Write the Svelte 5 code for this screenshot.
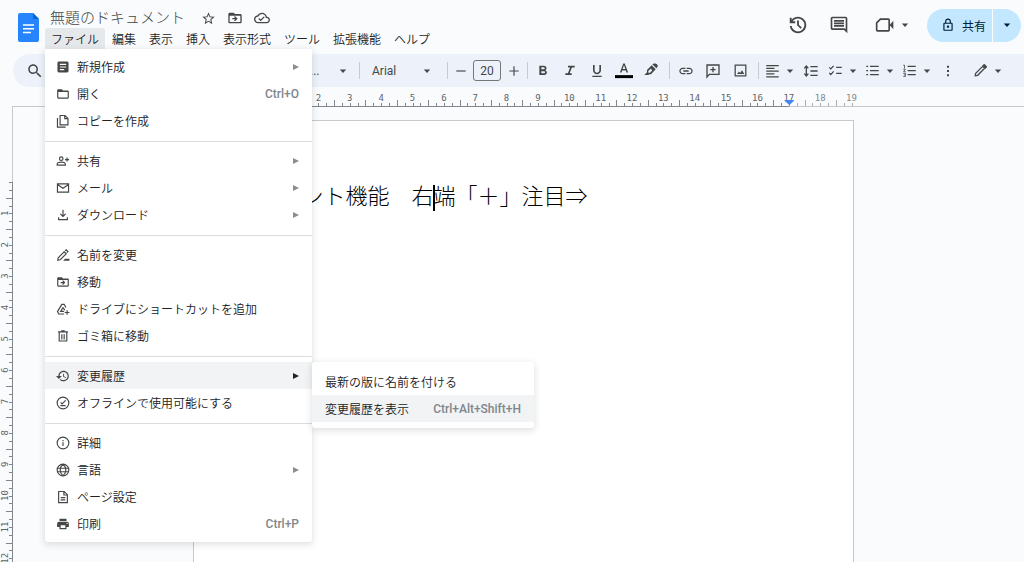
<script>
  // fill: solid outline path, line: stroked path, both on a 24 unit grid
  const icons = {
    star: { fill: 'M22 9.24l-7.19-.62L12 2 9.19 8.63 2 9.24l5.46 4.73L5.82 21 12 17.27 18.18 21l-1.63-7.03L22 9.24zM12 15.4l-3.76 2.27 1-4.28-3.32-2.88 4.38-.38L12 6.1l1.71 4.04 4.38.38-3.32 2.88 1 4.28L12 15.4z' },
    move: { fill: 'M20 6h-8l-2-2H4c-1.1 0-2 .9-2 2v12c0 1.1.9 2 2 2h16c1.1 0 2-.9 2-2V8c0-1.1-.9-2-2-2zm0 12H4V8.5h16V18zM12.16 12H8v2h4.16l-1.59 1.59L11.99 17 16 13.01 11.99 9l-1.41 1.41L12.16 12z' },
    cloud: { fill: 'M19.35 10.04C18.67 6.59 15.64 4 12 4 9.11 4 6.6 5.64 5.35 8.04 2.34 8.36 0 10.91 0 14c0 3.31 2.69 6 6 6h13c2.76 0 5-2.24 5-5 0-2.64-2.05-4.78-4.65-4.96zM19 18H6c-2.21 0-4-1.79-4-4 0-2.05 1.53-3.76 3.56-3.97l1.07-.11.5-.95C8.08 7.14 9.94 6 12 6c2.62 0 4.88 1.86 5.39 4.43l.3 1.5 1.53.11c1.56.1 2.78 1.41 2.78 2.96 0 1.65-1.35 3-3 3zm-9-3.82l-2.09-2.09L6.5 13.5 10 17l6.01-6.01-1.41-1.41z' },
    recent: { fill: 'M12 21q-3.45 0-6.01-2.29T3.05 13H5.1q.35 2.6 2.31 4.3T12 19q2.925 0 4.96-2.04T19 12q0-2.925-2.04-4.96T12 5q-1.725 0-3.225.8T6.25 8H9v2H3V4h2v2.35q1.275-1.6 3.11-2.475T12 3q1.875 0 3.51.71t2.85 1.925 1.925 2.85T21 12t-.71 3.51-1.925 2.85-2.85 1.925T12 21Zm2.8-4.8L11 12.4V7h2v4.6l3.2 3.2-1.4 1.4Z' },
    comment: { fill: 'M21.99 4c0-1.1-.89-2-1.99-2H4c-1.1 0-2 .9-2 2v12c0 1.1.9 2 2 2h14l4 4-.01-18zM20 4v13.17L18.83 16H4V4h16zM6 12h12v2H6zm0-3h12v2H6zm0-3h12v2H6z' },
    video: { line: 'M2 9.500L6.500 5H16Q17 5 17 6V18Q17 19 16 19H3Q2 19 2 18Z', fill: 'M17.500 12l4.500-5v10z' },
    lock: { fill: 'M18 8h-1V6c0-2.76-2.24-5-5-5S7 3.24 7 6v2H6c-1.1 0-2 .9-2 2v10c0 1.1.9 2 2 2h12c1.1 0 2-.9 2-2V10c0-1.1-.9-2-2-2zM9 6c0-1.66 1.34-3 3-3s3 1.34 3 3v2H9V6zm9 14H6V10h12v10zm-6-3c1.1 0 2-.9 2-2s-.9-2-2-2-2 .9-2 2 .9 2 2 2z' },
    search: { fill: 'M15.500 14h-.79l-.28-.27C15.410 12.590 16 11.110 16 9.500 16 5.910 13.090 3 9.500 3S3 5.910 3 9.500 5.910 16 9.500 16c1.610 0 3.090-.59 4.230-1.570l.27.28v.79l5 4.990L20.490 19l-4.990-5zm-6 0C7.010 14 5 11.990 5 9.500S7.010 5 9.500 5 14 7.010 14 9.500 11.990 14 9.500 14z' },
    article: { fill: 'M19 2.500H5A2.500 2.500 0 0 0 2.500 5v14A2.500 2.500 0 0 0 5 21.500h14a2.500 2.500 0 0 0 2.500-2.500V5A2.500 2.500 0 0 0 19 2.500zM14 17.500H6.500v-2H14zm3.500-4.500h-11v-2h11zm0-4.500h-11v-2h11z' },
    folder: { fill: 'M20 6h-8l-2-2H4c-1.1 0-2 .9-2 2v12c0 1.1.9 2 2 2h16c1.1 0 2-.9 2-2V8c0-1.1-.9-2-2-2zm0 12H4V8.500h16V18z' },
    copy: { line: 'M7 2.500h8.500l5 5V18.500H7zM15 3v5h5M2.500 7v15.500h14' },
    person: { line: 'M2 19v-1.500q0-3.500 7-3.500t7 3.500V19zM19 6v7M15.500 9.500h7', circle: [9, 8, 3] },
    mail: { line: 'M2.500 5h19v14h-19zM3 6.500l9 6 9-6' },
    download: { line: 'M12 3v11M7.500 10l4.500 4.500 4.500-4.500M4.500 16v4h15v-4' },
    rename: { line: 'M3 21l.8-4.200L14 6.500l3.500 3.500L7.200 20.200zM15.500 5l2-2 3 3-2 2', fill: 'M12 22l3.500-3.500H23V22z' },
    drive: { line: 'M17 9.500L14 4h-4L2.500 16.500l2.200 4H14M12 9.500l-4 6.500h6M12 9.500l3 4.500M19 14v8M15 18h8' },
    trash: { line: 'M5.500 6v14.500h13V6M3.500 5h17M9 3h6M10 9v9M14 9v9' },
    history: { fill: 'M13 3c-4.970 0-9 4.030-9 9H0l5 5 5-5H6c0-3.870 3.130-7 7-7s7 3.130 7 7-3.130 7-7 7c-1.930 0-3.680-.79-4.940-2.060l-1.420 1.420C8.270 19.990 10.510 21 13 21c4.970 0 9-4.030 9-9s-4.030-9-9-9zm-1 5v5l4.280 2.540.72-1.210-3.500-2.080V8H12z' },
    offline: { line: 'M16.500 7.500l-6 6-2.500-2.500M7.500 16.500h9', circle: [12, 12, 10] },
    info: { line: 'M12 10.500v6.500M12 7v2', circle: [12, 12, 10] },
    globe: { line: 'M2 9h20M2 15h20M12 2C5.500 8 5.500 16 12 22M12 2c6.500 6 6.500 14 0 20', circle: [12, 12, 10] },
    page: { line: 'M4.500 2.500h9.500l5.500 5.500v13.500h-15zM13.500 3v5.500h5.500M8 13h8M8 17h8' },
    print: { fill: 'M19 8H5c-1.660 0-3 1.340-3 3v6h4v4h12v-4h4v-6c0-1.660-1.340-3-3-3zm-3 11H8v-5h8v5zm3-7c-.55 0-1-.45-1-1s.45-1 1-1 1 .45 1 1-.45 1-1 1zm-1-9H6v4h12V3z' },
    minus: { line: 'M4 12h16' },
    plus: { line: 'M4 12h16M12 4v16' },
    bold: { fill: 'M15.600 10.790c.97-.67 1.650-1.770 1.650-2.790 0-2.260-1.750-4-4-4H6.500v14h7.540c2.090 0 3.710-1.700 3.710-3.790 0-1.520-.86-2.820-2.150-3.420zM9.500 6.500h3.500c.83 0 1.500.67 1.500 1.500s-.67 1.500-1.500 1.500H9.500v-3zm4 9H9.500v-3.200h4c.83 0 1.600.77 1.600 1.600s-.77 1.600-1.600 1.600z' },
    italic: { fill: 'M9 4v2.600h3.200L8.800 15.400H5V18h9.500v-2.600h-3L14.900 6.600H19V4z' },
    underline: { fill: 'M12 17c3.310 0 6-2.690 6-6V3h-2.500v8c0 1.930-1.570 3.500-3.500 3.500S8.500 12.930 8.500 11V3H6v8c0 3.310 2.690 6 6 6zm-7 2v2h14v-2H5z' },
    color: { fill: 'M11 2L6.500 14h2.100l1-2.800h4.800l1 2.800h2.100L13 2h-2zm-.8 7.400L12 4.300l1.800 5.100z', bar: true },
    marker: { fill: 'M14 2l6 6 1.700-2q1.300-2-.7-4t-4.500-1.200zM4.500 18H8l1.500-1H12l7-7.500-6-6L6 10.500v3.500L2 18z', hole: 'M8 14.500V12l3.500-3.500 2.500 2.500-3.500 3.500z' },
    link: { fill: 'M3.900 12c0-1.710 1.390-3.100 3.100-3.100h4V7H7c-2.760 0-5 2.240-5 5s2.240 5 5 5h4v-1.900H7c-1.710 0-3.100-1.390-3.100-3.100zM8 13h8v-2H8v2zm9-6h-4v1.900h4c1.710 0 3.100 1.390 3.100 3.100s-1.390 3.100-3.100 3.100h-4V17h4c2.760 0 5-2.240 5-5s-2.240-5-5-5z' },
    addcomment: { line: 'M3 21V3h18v14H6.500zM12 6v8M8 10h8' },
    image: { line: 'M3.500 3.500h17v17h-17z', fill: 'M6.500 17.500l3-4 2 2.500 3-4.500 3.500 6z' },
    align: { line: 'M2 4h20M2 8.500h13M2 13h20M2 17.500h13M2 22h20' },
    spacing: { line: 'M11 5.500h11M11 12h11M11 18.500h11M5 5v14M2 8l3-3.500L8 8M2 16l3 3.500L8 16' },
    checks: { line: 'M2 7l2.500 2.500L9 4.500M2 16l2.500 2.500L9 13.500M13 7h9M13 16.500h9' },
    bullets: { line: 'M8 5.500h14M8 12h14M8 18.500h14M2 5.500h3M2 12h3M2 18.500h3' },
    numbers: { line: 'M9 5.500h13M9 12h13M9 18.500h13', thin: 'M2 3.500h2v5M2 10h3.500L2.500 14H6M2 16.500h3.500v5H2M3 19h2' },
    more: { fill: 'M10.500 4h3v3h-3zM10.500 10.500h3v3h-3zM10.500 17h3v3h-3z' },
    pen: { line: 'M3.500 20.500l.8-4L15.500 5.300l3.200 3.200L7.500 19.700z', fill: 'M15 4l2-2q1-.8 2 0l3 3q.8 1 0 2l-2 2z' }
  };

  const fileGroups = [
    [
      { icon: 'article', label: '新規作成', sub: true },
      { icon: 'folder', label: '開く', keys: 'Ctrl+O' },
      { icon: 'copy', label: 'コピーを作成' }
    ],
    [
      { icon: 'person', label: '共有', sub: true },
      { icon: 'mail', label: 'メール', sub: true },
      { icon: 'download', label: 'ダウンロード', sub: true }
    ],
    [
      { icon: 'rename', label: '名前を変更' },
      { icon: 'move', label: '移動' },
      { icon: 'drive', label: 'ドライブにショートカットを追加' },
      { icon: 'trash', label: 'ゴミ箱に移動' }
    ],
    [
      {
        icon: 'history', label: '変更履歴', sub: true, open: true,
        children: [
          { label: '最新の版に名前を付ける' },
          { label: '変更履歴を表示', keys: 'Ctrl+Alt+Shift+H', active: true }
        ]
      },
      { icon: 'offline', label: 'オフラインで使用可能にする' }
    ],
    [
      { icon: 'info', label: '詳細' },
      { icon: 'globe', label: '言語', sub: true },
      { icon: 'page', label: 'ページ設定' },
      { icon: 'print', label: '印刷', keys: 'Ctrl+P' }
    ]
  ];

  const menus = ['編集', '表示', '挿入', '表示形式', 'ツール', '拡張機能', 'ヘルプ'];

  // Ruler scale: pixels per centimetre and the page margin before zero
  const cm = 31.36;
  const origin = 62.7;
  const range = (from, to) => Array.from({ length: to - from + 1 }, (_, i) => from + i);
  const isHalf = (q) => Math.abs(q % 4) === 2;
</script>

{#snippet icon(name, size)}
  {@const i = icons[name]}
  <svg width={size} height={size} viewBox="0 0 24 24" aria-hidden="true">
    {#if i.fill}<path d={i.fill} fill="currentColor" />{/if}
    {#if i.hole}<path d={i.hole} fill="#edf2fa" />{/if}
    {#if i.line}<path d={i.line} fill="none" stroke="currentColor" stroke-width="2" />{/if}
    {#if i.thin}<path d={i.thin} fill="none" stroke="currentColor" stroke-width="1.300" />{/if}
    {#if i.circle}<circle cx={i.circle[0]} cy={i.circle[1]} r={i.circle[2]} fill="none" stroke="currentColor" stroke-width="2" />{/if}
    {#if i.bar}<path d="M0 17.500h24v4H0z" fill="#000" />{/if}
  </svg>
{/snippet}

{#snippet caret()}
  <svg class="caret" width="8" height="8" viewBox="0 0 8 8" aria-hidden="true"><path d="M.8 2.500h6.400L4 6z" fill="currentColor" /></svg>
{/snippet}

{#snippet tool(name, label, size = 16)}
  <button class="tool" aria-label={label}>{@render icon(name, size)}</button>
{/snippet}

{#snippet drop(name, label)}
  <button class="tool drop" aria-label={label}>{@render icon(name, 15)}{@render caret()}</button>
{/snippet}

<div class="app">
  <header>
    <a class="logo" href="#home" aria-label="ドキュメント ホーム">
      <svg width="21" height="29" viewBox="0 0 21 29" aria-hidden="true">
        <path d="M2 0h13l6 6v21a2 2 0 0 1-2 2H2a2 2 0 0 1-2-2V2a2 2 0 0 1 2-2z" fill="#2684fc" />
        <path d="M15 0l6 6h-6z" fill="#0066da" />
        <path d="M5 12h11M5 15.800h11M5 19.600h8" stroke="#fff" stroke-width="1.500" />
      </svg>
    </a>
    <div class="heading">
      <div class="title-row">
        <h1>無題のドキュメント</h1>
        <button aria-label="スター">{@render icon('star', 15)}</button>
        <button aria-label="移動">{@render icon('move', 16)}</button>
        <button aria-label="保存状況">{@render icon('cloud', 16)}</button>
      </div>
      <nav>
        <div class="file">
          <button class="menu-name open" aria-haspopup="menu" aria-expanded="true">ファイル</button>
          <div class="menu">
            {#each fileGroups as group}
              <ul>
                {#each group as item}
                  <li>
                    <button class="row" class:active={item.open}>
                      {@render icon(item.icon, 14)}
                      <span class="label">{item.label}</span>
                      {#if item.keys}<kbd>{item.keys}</kbd>{/if}
                      {#if item.sub}
                        <svg class="arrow" width="6" height="6" viewBox="0 0 6 6" aria-hidden="true"><path d="M0 0l6 3-6 3z" fill="currentColor" /></svg>
                      {/if}
                    </button>
                    {#if item.children}
                      <ul class="submenu">
                        {#each item.children as child}
                          <li>
                            <button class="row" class:active={child.active}>
                              <span class="label">{child.label}</span>
                              {#if child.keys}<kbd>{child.keys}</kbd>{/if}
                            </button>
                          </li>
                        {/each}
                      </ul>
                    {/if}
                  </li>
                {/each}
              </ul>
            {/each}
          </div>
        </div>
        {#each menus as name}<button class="menu-name">{name}</button>{/each}
      </nav>
    </div>
    <div class="actions">
      <button aria-label="最終編集">{@render icon('recent', 22)}</button>
      <button aria-label="コメント">{@render icon('comment', 20)}</button>
      <button class="meet" aria-label="会議">{@render icon('video', 20)}{@render caret()}</button>
      <div class="share">
        <button class="share-main">{@render icon('lock', 14)}共有</button>
        <button class="share-more" aria-label="共有オプション">{@render caret()}</button>
      </div>
    </div>
  </header>

  <div class="toolbar">
    {@render tool('search', '検索', 18)}
    <div class="field style-field">
      <select aria-label="スタイル"><option>標準...</option></select>
      {@render caret()}
    </div>
    <i class="rule"></i>
    <div class="field font-field">
      <select aria-label="フォント"><option>Arial</option></select>
      {@render caret()}
    </div>
    <i class="rule"></i>
    <div class="size">
      <button aria-label="縮小">{@render icon('minus', 14)}</button>
      <input type="text" value="20" aria-label="フォントサイズ" />
      <button aria-label="拡大">{@render icon('plus', 14)}</button>
    </div>
    <i class="rule"></i>
    <div class="group">
      {@render tool('bold', '太字')}
      {@render tool('italic', '斜体')}
      {@render tool('underline', '下線')}
      {@render tool('color', 'テキストの色', 18)}
      {@render tool('marker', 'ハイライト')}
    </div>
    <i class="rule"></i>
    <div class="group insert">
      {@render tool('link', 'リンク')}
      {@render tool('addcomment', 'コメントを追加')}
      {@render tool('image', '画像', 15)}
    </div>
    <i class="rule"></i>
    <div class="group lists">
      {@render drop('align', '配置')}
      {@render tool('spacing', '行間隔')}
      {@render drop('checks', 'チェックリスト')}
      {@render drop('bullets', '箇条書き')}
      {@render drop('numbers', '番号付きリスト')}
      {@render tool('more', 'その他')}
    </div>
    <div class="mode">{@render drop('pen', '編集モード')}</div>
  </div>

  <div class="ruler">
    <svg width="668" height="20" aria-hidden="true">
      {#each range(-8, 76) as q}
        <rect x={Math.round(origin + (q * cm) / 4)} y={isHalf(q) ? 13 : 16} width="1" height={isHalf(q) ? 6 : 3} fill={q > 68 ? '#aaaeb2' : '#80868b'} />
      {/each}
      <rect x="0" y="19" width={origin + 17 * cm} height="1" fill="#80868b" />
      {#each range(2, 19) as n}
        <text x={origin + n * cm} y="14" text-anchor="middle" fill={n > 17 ? '#85898d' : '#5f6368'}>{n}</text>
      {/each}
      <path d="M{origin + 17 * cm - 4} 13h9v1l-4.500 4-4.500-4z" fill="#4285f4" />
    </svg>
  </div>

  <main>
    <div class="side">
      <svg width="14" height="100%" aria-hidden="true">
        <rect x="12" y="0" width="1" height="100%" fill="#c7c9cc" />
        <rect x="12" y="75" width="1" height="100%" fill="#80868b" />
        {#each range(0, 50) as q}
          <rect x={isHalf(q) ? 6 : 9} y={Math.round(75 + (q * cm) / 4)} width={isHalf(q) ? 7 : 4} height="1" fill="#80868b" />
        {/each}
        {#each range(1, 12) as n}
          <text transform="translate(8 {75 + n * cm}) rotate(-90)" text-anchor="middle" fill="#5f6368">{n}</text>
        {/each}
      </svg>
    </div>
    <div class="canvas">
      <article><p>コメント機能　右<span class="cursor"></span>端「＋」注目⇒</p></article>
    </div>
  </main>
</div>

<style>
  :global(body) {
    background: #f9fbfd;
  }
  .app {
    display: flex;
    flex-direction: column;
    height: 100vh;
    overflow: hidden;
    color: #444746;
    font-family: Roboto, "Noto Sans CJK JP", sans-serif;
    font-size: 12px;
  }
  button, select, input {
    font: inherit;
    color: inherit;
    background: none;
    border: 0;
    margin: 0;
    padding: 0;
  }
  button {
    display: flex;
    align-items: center;
    white-space: nowrap;
  }
  svg {
    display: block;
    flex: none;
  }
  ul {
    list-style: none;
    margin: 0;
    padding: 0;
  }
  header {
    display: flex;
    height: 54px;
    flex: none;
    position: relative;
    z-index: 2;
  }
  .logo {
    padding: 13px 6px 0 18px;
  }
  .title-row {
    display: flex;
    align-items: center;
    gap: 11px;
    height: 20px;
    padding: 8px 0 0 5px;
  }
  h1 {
    margin: 0 5px 0 0;
    font-size: 15px;
    line-height: 20px;
    font-weight: 300;
    color: #444746;
  }
  nav {
    display: flex;
    gap: 1px;
    font-weight: 350;
    color: #1f1f1f;
  }
  .file {
    position: relative;
  }
  .menu-name {
    height: 21px;
    padding: 0 6px;
  }
  .menu-name.open {
    background: #e6e9ec;
    border-radius: 3px 3px 0 0;
  }
  .menu {
    position: absolute;
    top: 100%;
    left: 0;
    width: 267px;
    padding: 4px 0 5px;
    background: #fff;
    border-radius: 0 3px 3px 3px;
    box-shadow: 0 2px 6px 1px rgba(60, 64, 67, 0.15);
  }
  .menu > ul + ul {
    margin-top: 7px;
    padding-top: 5px;
    border-top: 1px solid #dadce0;
  }
  li {
    position: relative;
  }
  .row {
    width: 100%;
    height: 27px;
    padding: 0 13px 0 11px;
    gap: 7px;
    color: #444746;
  }
  .row.active {
    background: #f1f3f4;
  }
  .label {
    flex: 1;
    text-align: left;
    color: #202124;
  }
  kbd {
    font-family: Roboto, sans-serif;
    font-weight: 500;
    color: #80868b;
  }
  .arrow {
    color: #8a8d91;
  }
  .active .arrow {
    color: #202124;
  }
  .submenu {
    position: absolute;
    left: 100%;
    top: 0;
    width: 222px;
    padding: 6px 0;
    background: #fff;
    border-radius: 3px;
    box-shadow: 0 2px 6px 1px rgba(60, 64, 67, 0.15);
  }
  .submenu .row {
    padding: 0 13px;
  }
  .actions {
    display: flex;
    align-items: center;
    gap: 20px;
    height: 34px;
    margin: 8px 3px 0 auto;
  }
  .meet {
    gap: 6px;
    padding-left: 6px;
  }
  .share {
    display: flex;
    gap: 1px;
    height: 33px;
    margin-left: -2px;
    color: #001d35;
  }
  .share button {
    background: #c2e7ff;
    height: 100%;
  }
  .share-main {
    gap: 7px;
    padding: 0 6px 0 14px;
    border-radius: 17px 0 0 17px;
  }
  .share-more {
    padding: 0 10px;
    border-radius: 0 17px 17px 0;
  }
  .toolbar {
    display: flex;
    align-items: center;
    flex: none;
    height: 33px;
    margin-left: 13px;
    padding: 0 22px 0 13px;
    background: #edf2fa;
    border-radius: 17px 0 0 17px;
  }
  .tool {
    justify-content: center;
    min-width: 18px;
    height: 24px;
  }
  .drop {
    gap: 6px;
  }
  .rule {
    width: 1px;
    height: 17px;
    margin: 0 6px;
    background: #c7cbd1;
  }
  .field {
    display: flex;
    align-items: center;
    justify-content: space-between;
    box-sizing: border-box;
    height: 24px;
    padding: 0 6px;
  }
  select {
    appearance: none;
  }
  .style-field {
    width: 73px;
    margin-left: 236px;
  }
  .font-field {
    width: 75px;
    padding-right: 10px;
  }
  .size {
    display: flex;
    align-items: center;
  }
  input {
    box-sizing: border-box;
    width: 28px;
    height: 21px;
    margin: 0 6px 0 5px;
    border: 1px solid #747775;
    border-radius: 3px;
    text-align: center;
  }
  .group {
    display: flex;
    gap: 9px;
    padding-right: 3px;
  }
  .insert {
    padding-left: 1px;
  }
  .lists {
    gap: 8px;
  }
  .mode {
    margin-left: auto;
  }
  .ruler {
    display: flex;
    justify-content: center;
    flex: none;
    margin-left: 12px;
    padding-left: 18px;
    background: linear-gradient(#c7c9cc, #c7c9cc) bottom / 100% 1px no-repeat;
  }
  text {
    font-family: "DejaVu Sans Mono", monospace;
    font-size: 9px;
  }
  main {
    display: flex;
    flex: 1;
    min-height: 0;
  }
  .side {
    width: 14px;
    overflow: hidden;
  }
  .canvas {
    flex: 1;
    display: flex;
    justify-content: center;
    padding: 13px 0 0 8px;
  }
  article {
    box-sizing: border-box;
    width: 661px;
    padding: 59px 64px;
    background: #fff;
    border: 1px solid #c7c9cc;
    border-bottom: 0;
  }
  p {
    margin: 0;
    color: #000;
    font-family: "Noto Sans CJK JP", sans-serif;
    font-weight: 300;
    font-size: 22px;
    line-height: 28px;
    white-space: nowrap;
  }
  .cursor {
    display: inline-block;
    width: 2px;
    height: 26px;
    margin: 0 -1px;
    background: #000;
    vertical-align: middle;
  }
</style>
